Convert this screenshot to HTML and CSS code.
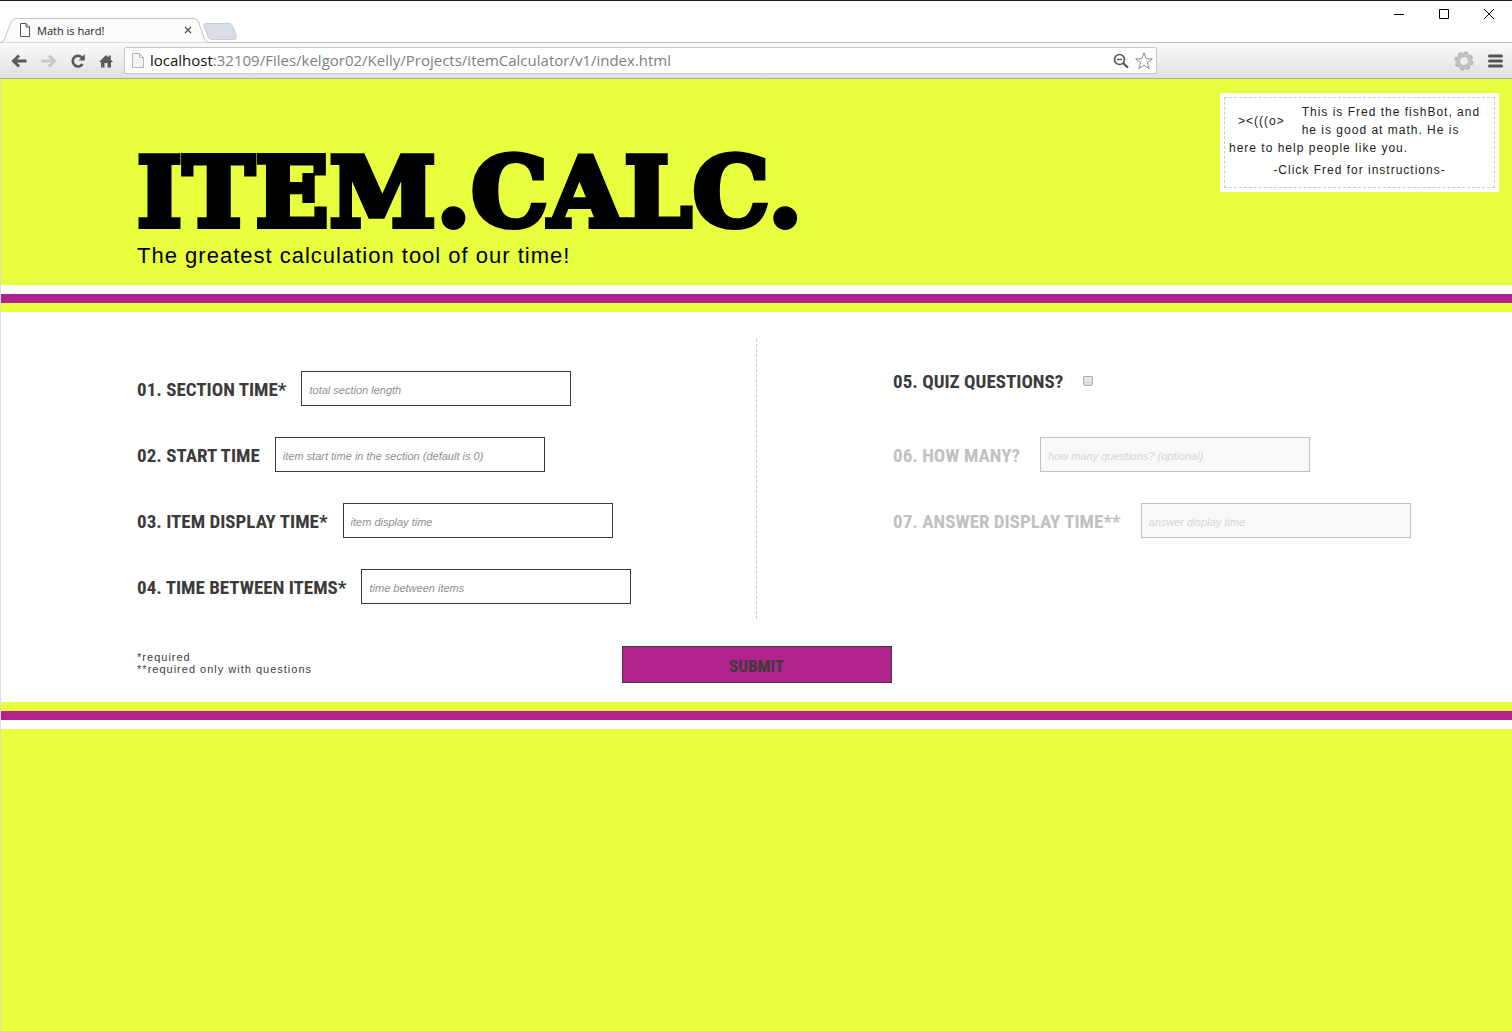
FILE: index.html
```html
<!DOCTYPE html>
<html lang="en">
<head>
<meta charset="utf-8">
<meta name="viewport" content="width=device-width, initial-scale=1">
<title>Math is hard!</title>
<link rel="stylesheet" href="styles.css">
</head>
<body>
<div class="browser">
  <div class="titlebar">
    <div class="tabs">
      <div class="tab">
        <svg class="tab-shape" width="210" height="25" viewBox="0 0 210 25" aria-hidden="true"><path d="M0 24.500C3 24 4 23 5 20L11 4Q12.500 .500 16 .500H194Q197 .500 198.500 4L204 20Q205.500 24 209 24.500" fill="#fbfbfb" stroke="#c4c4c4"/></svg>
        <svg class="tab-file" width="10" height="14" viewBox="0 0 10 14" aria-hidden="true"><path d="M.5.5h5.500L9.500 4v9.500H.5zM6 .5V4h3.500" fill="#fff" stroke="#555"/></svg>
        <span class="tab-title">Math is hard!</span>
        <button class="tab-close" type="button" aria-label="Close tab"><svg width="8" height="8" viewBox="0 0 8 8"><path d="M1 1l6 6M7 1L1 7" stroke="#555" stroke-width="1.400"/></svg></button>
      </div>
      <button class="new-tab" type="button" aria-label="New tab"><svg width="34" height="17" viewBox="0 0 34 17"><path d="M4 .5h22q3 0 4 3l3 9q1 4-2 4H9q-3 0-4-3L1 3Q0 .5 4 .5z" fill="#d9dde5" stroke="#c8ccd4"/></svg></button>
    </div>
    <div class="window-buttons">
      <button type="button" aria-label="Minimize"><svg width="10" height="10" viewBox="0 0 10 10"><path d="M0 5.500h10" stroke="#000"/></svg></button>
      <button type="button" aria-label="Maximize"><svg width="10" height="10" viewBox="0 0 10 10"><path d="M.5.5h9v9h-9z" fill="none" stroke="#000"/></svg></button>
      <button type="button" aria-label="Close"><svg width="10" height="10" viewBox="0 0 10 10"><path d="M0 0l10 10M10 0L0 10" stroke="#000"/></svg></button>
    </div>
  </div>
  <div class="toolbar">
    <div class="nav">
      <button type="button" aria-label="Back"><svg width="16" height="14" viewBox="0 0 16 14"><path d="M15.500 7H3M8 1.500L2.500 7 8 12.500" fill="none" stroke="#5a5a5a" stroke-width="3"/></svg></button>
      <button type="button" aria-label="Forward"><svg width="16" height="14" viewBox="0 0 16 14"><path d="M.5 7H13M8 1.500L13.500 7 8 12.500" fill="none" stroke="#c9c9c9" stroke-width="3"/></svg></button>
      <button type="button" aria-label="Reload"><svg width="14" height="14" viewBox="0 0 14 14"><path d="M11.500 10A5.300 5.300 0 1 1 10.800 3.400" fill="none" stroke="#5a5a5a" stroke-width="2.600"/><path d="M13.800 0v6.500H7.500z" fill="#5a5a5a"/></svg></button>
      <button type="button" aria-label="Home"><svg width="14" height="14" viewBox="0 0 14 14"><path d="M7 1l2.500 2.500V1.500h2.200v4.100L14 8h-2v5.500H8.500V9h-3v4.500H2V8H0z" fill="#5a5a5a"/></svg></button>
    </div>
    <div class="address">
      <svg width="12" height="15" viewBox="0 0 12 15" aria-hidden="true"><path d="M.5.5h7L11.500 4.500v10H.5zM7.500.5v4h4" fill="#f5f5f5" stroke="#b5b5b5"/></svg>
      <a class="url" href="#"><span class="host">localhost</span>:32109/Files/kelgor02/Kelly/Projects/itemCalculator/v1/index.html</a>
      <svg width="16" height="16" viewBox="0 0 16 16" aria-hidden="true"><circle cx="6.500" cy="6.500" r="5" fill="#fff" stroke="#555" stroke-width="1.600"/><path d="M4 6.500h5" stroke="#555" stroke-width="1.400"/><path d="M10.300 10.300l4.700 4.500" stroke="#555" stroke-width="2.200"/></svg>
      <svg width="18" height="18" viewBox="0 0 18 18" aria-hidden="true"><path d="M9 .8l2.100 5.900 6.200.2-4.900 3.800 1.800 6L9 13.200l-5.200 3.500 1.800-6L.7 6.900l6.200-.2z" fill="#fff" stroke="#8d8d8d"/></svg>
    </div>
    <div class="extensions">
      <button type="button" aria-label="Extension"><svg width="20" height="20" viewBox="0 0 20 20"><circle cx="10" cy="10" r="6.200" fill="none" stroke="#c3c3c3" stroke-width="4.600"/><circle cx="10" cy="10" r="8.600" fill="none" stroke="#b5b5b5" stroke-width="1.800" stroke-dasharray="4 2.754"/><circle cx="10" cy="10" r="4.600" fill="#ededed" stroke="#b0b0b0" stroke-width=".8"/></svg></button>
      <button type="button" aria-label="Menu"><svg width="15" height="14" viewBox="0 0 15 14"><path d="M1.500 2h12M1.500 7h12M1.500 12h12" stroke="#555" stroke-width="3" stroke-linecap="round"/></svg></button>
    </div>
  </div>
</div>

<div class="page">
  <header class="banner">
    <div class="brand">
      <h1>ITEM.CALC.</h1>
      <p>The greatest calculation tool of our time!</p>
    </div>
    <aside class="fred">
      <div class="fred-inner">
        <a class="fish" href="#">&gt;&lt;(((o&gt;</a>
        <p>This is Fred the fishBot, and he is good at math. He is here to help people like you.</p>
        <p class="hint">-Click Fred for instructions-</p>
      </div>
    </aside>
  </header>
  <div class="stripe white"></div>
  <div class="stripe magenta"></div>
  <div class="stripe lime"></div>

  <form class="calc">
    <div class="columns">
      <div class="column">
        <div class="field"><label for="section">01. SECTION TIME*</label><input id="section" type="text" placeholder="total section length"></div>
        <div class="field"><label for="start">02. START TIME</label><input id="start" type="text" placeholder="item start time in the section (default is 0)"></div>
        <div class="field"><label for="display">03. ITEM DISPLAY TIME*</label><input id="display" type="text" placeholder="item display time"></div>
        <div class="field"><label for="between">04. TIME BETWEEN ITEMS*</label><input id="between" type="text" placeholder="time between items"></div>
      </div>
      <div class="column quiz">
        <div class="field check"><label for="quiz">05. QUIZ QUESTIONS?</label><input id="quiz" type="checkbox"></div>
        <div class="field off"><label for="count">06. HOW MANY?</label><input id="count" type="text" placeholder="how many questions? (optional)" disabled></div>
        <div class="field off"><label for="answer">07. ANSWER DISPLAY TIME**</label><input id="answer" type="text" placeholder="answer display time" disabled></div>
      </div>
    </div>
    <div class="actions">
      <p class="notes">*required<br>**required only with questions</p>
      <button class="submit" type="submit">SUBMIT</button>
    </div>
  </form>

  <div class="stripe lime"></div>
  <div class="stripe magenta"></div>
  <div class="stripe white"></div>
</div>
</body>
</html>
```
FILE: styles.css
```css
* { box-sizing: border-box; }

body {
  margin: 0;
  min-height: 100vh;
  display: flex;
  flex-direction: column;
  font-family: "Liberation Sans", Arial, sans-serif;
  color: #3b3b3b;
}

h1, p { margin: 0; }
a { color: inherit; text-decoration: none; }
svg { display: block; flex: none; }
button { border: 0; padding: 0; background: none; font: inherit; color: inherit; }

/* Browser frame */
.browser {
  border-top: 1px solid #1b1b1b;
  background: #fff;
  font-family: "Open Sans", "Noto Sans", sans-serif;
}

.titlebar {
  display: flex;
  justify-content: space-between;
  height: 41px;
}

.tabs { display: flex; align-items: flex-end; }

.tab {
  position: relative;
  display: flex;
  align-items: center;
  width: 203px;
  height: 24px;
  padding: 0 11px 0 20px;
}

.tab-shape { position: absolute; left: 0; top: 0; }
.tab-file, .tab-title, .tab-close { position: relative; }
.tab-title { flex: 1; padding-left: 7px; font-size: 11px; color: #222; }

.new-tab { margin-bottom: 2px; }

.window-buttons {
  display: flex;
  align-items: flex-start;
  gap: 35px;
  padding: 8px 18px 0 0;
}

.toolbar {
  display: flex;
  align-items: center;
  height: 37px;
  border-top: 1px solid #b9b9b9;
  border-bottom: 1px solid #a9a9a9;
  background: linear-gradient(#fafafa, #e0e0e0);
}

.nav {
  display: flex;
  align-items: center;
  gap: 14px;
  width: 124px;
  padding-left: 11px;
}

.address {
  display: flex;
  align-items: center;
  gap: 6px;
  width: 1033px;
  flex-shrink: 1;
  min-width: 0;
  height: 27px;
  padding: 0 3px 0 7px;
  border: 1px solid #c4c4c4;
  border-radius: 2px;
  background: #fff;
}

.url {
  flex: 1;
  min-width: 0;
  overflow: hidden;
  white-space: nowrap;
  font-size: 15px;
  line-height: 20px;
  padding-bottom: 2px;
  color: #808080;
}

.host { color: #111; }

.extensions {
  display: flex;
  align-items: center;
  gap: 14px;
  margin-left: auto;
  padding-right: 9px;
}

/* Page */
.page {
  flex: 1;
  border-left: 1px solid #ddd;
  background: #e8ff3d;
  letter-spacing: 1px;
}

.banner {
  display: flex;
  justify-content: space-between;
  align-items: flex-start;
  padding: 14px 13px 16px 9vw;
  color: #000;
}

.brand { padding-top: 50px; }

h1 {
  font-family: "DejaVu Serif", serif;
  font-size: 96px;
  line-height: 100px;
  font-weight: bold;
  -webkit-text-stroke: 6px #000;
}

.brand p { font-size: 22px; line-height: 26px; }

.fred {
  width: 279px;
  padding: 4px;
  background: #fff;
}

.fred-inner {
  padding: 5px 4px 8px;
  border: 1px dashed #ccc;
  font-size: 12px;
  line-height: 18px;
  color: #222;
}

.fish { float: left; padding: 9px 17px 9px 9px; }
.fred .hint { padding-top: 4px; text-align: center; }

.stripe { height: 9px; }
.white { background: #fff; }
.magenta { background: #b0228c; }
.lime { background: #e8ff3d; }

/* Calculator form */
.calc {
  padding: 27px 0 19px;
  background: #fff;
}

.columns { display: flex; }

.column {
  flex: 1;
  display: flex;
  flex-direction: column;
  gap: 31px;
  padding: 32px 0 15px 9vw;
}

.field {
  display: flex;
  align-items: center;
  gap: 15px;
  height: 35px;
}

.quiz { border-left: 1px dashed #ccc; }
.quiz .field { gap: 20px; }

.field label, .submit {
  font-family: "Roboto Condensed", "Liberation Sans Narrow", sans-serif;
  font-weight: bold;
  font-size: 19px;
  line-height: 20px;
  letter-spacing: 0;
  white-space: nowrap;
}

.field label { padding-top: 3px; }

.field input[type="text"] {
  width: 270px;
  height: 35px;
  padding: 2px 7px 0;
  border: 1px solid #3b3b3b;
  background: #fff;
  font: italic 11px "Liberation Sans", Arial, sans-serif;
}

.field input::placeholder { color: #8f8f8f; opacity: 1; }

.check { align-items: flex-start; }
.field.check label { padding-top: 1px; }

.check input {
  appearance: none;
  width: 10px;
  height: 10px;
  margin: 5px 0 0;
  border: 1px solid #aaa;
  border-radius: 2px;
  background: linear-gradient(#eee, #d8d8d8);
}

.off label { color: #c1c1c1; }
.off input[type="text"] { border-color: #c1c1c1; background: #f9f9f8; }
.off input::placeholder { color: #d6d6d6; }

.actions {
  display: grid;
  grid-template-columns: 1fr 270px 1fr;
  align-items: start;
  padding-top: 27px;
}

.notes {
  padding: 5px 0 0 9vw;
  font-size: 11px;
  line-height: 12px;
}

.submit {
  height: 37px;
  padding-top: 3px;
  border: 1px solid #3b3b3b;
  background: #b0228c;
  font-size: 17px;
}
```
